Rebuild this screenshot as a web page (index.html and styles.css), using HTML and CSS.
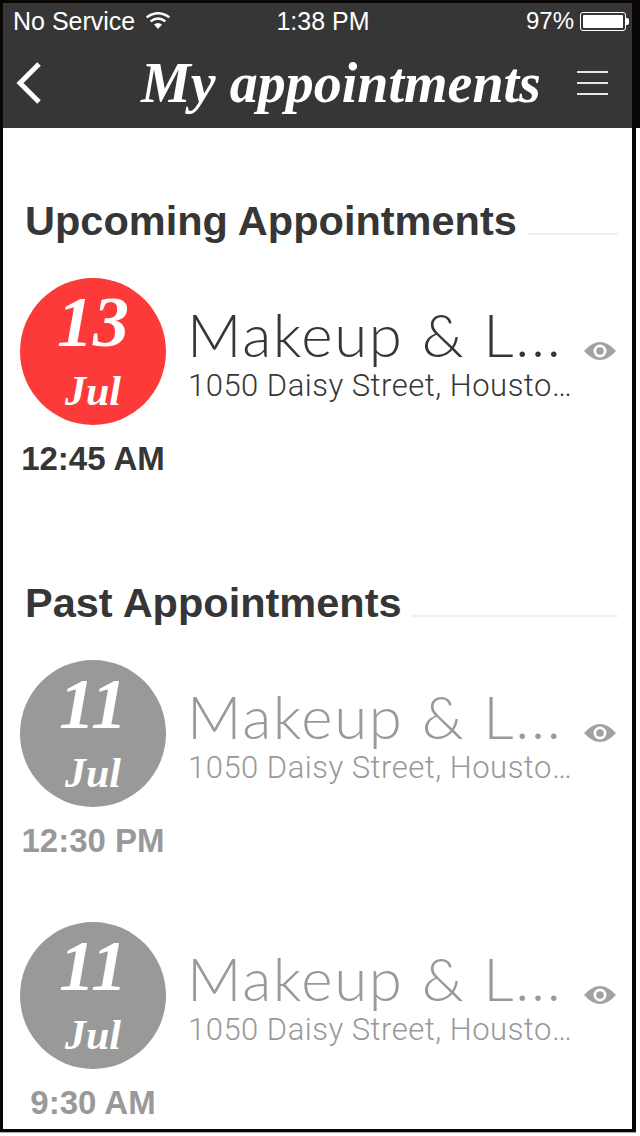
FILE: index.html
```html
<!DOCTYPE html>
<html lang="en">

<head>
    <meta charset="UTF-8">
    <meta name="viewport" content="width=device-width, initial-scale=1.0">
    <title>My appointments</title>
    <link rel="stylesheet" href="styles.css">
</head>

<body>
    <div class="frame">
        <header class="top-bar">
            <div class="status-bar">
                <div class="status-left">
                    <span>No Service</span>
                    <svg class="wifi" width="26" height="18" viewBox="0 0 26 18">
                        <path d="M13 17 L9 12.6 Q13 9.6 17 12.6 Z" fill="#fff" />
                        <path d="M5.6 9.4 Q13 3.6 20.4 9.4" fill="none" stroke="#fff" stroke-width="2.4" />
                        <path d="M1.6 5.4 Q13 -3 24.4 5.4" fill="none" stroke="#fff" stroke-width="2.4" />
                    </svg>
                </div>
                <span class="status-time">1:38 PM</span>
                <div class="status-right">
                    <span>97%</span>
                    <div class="battery">
                        <div class="battery-fill"></div>
                    </div>
                    <div class="battery-tip"></div>
                </div>
            </div>
            <div class="nav-bar">
                <svg class="back" width="30" height="44" viewBox="0 0 30 44">
                    <path d="M25 3 L6 22 L25 41" fill="none" stroke="#fff" stroke-width="5" />
                </svg>
                <h1 class="nav-title">My appointments</h1>
                <div class="menu">
                    <span></span>
                    <span></span>
                    <span></span>
                </div>
            </div>
        </header>

        <main class="content">
            <section class="section upcoming">
                <div class="section-head">
                    <h2>Upcoming Appointments</h2>
                    <div class="rule"></div>
                </div>
                <div class="appt">
                    <div class="when">
                        <div class="date-circle red">
                            <span class="day">13</span>
                            <span class="month">Jul</span>
                        </div>
                        <p class="time">12:45 AM</p>
                    </div>
                    <div class="info">
                        <h3>Makeup &amp; L...</h3>
                        <p>1050 Daisy Street, Housto…</p>
                    </div>
                    <svg class="eye" width="34" height="22" viewBox="0 0 34 22">
                        <path fill-rule="evenodd" d="M1 11 Q17 -7 33 11 Q17 29 1 11 Z M17 4.5 A6.5 6.5 0 1 0 17 17.5 A6.5 6.5 0 1 0 17 4.5 Z" />
                        <circle cx="17" cy="11" r="3.8" />
                    </svg>
                </div>
            </section>

            <section class="section past">
                <div class="section-head">
                    <h2>Past Appointments</h2>
                    <div class="rule"></div>
                </div>
                <div class="appt">
                    <div class="when">
                        <div class="date-circle">
                            <span class="day">11</span>
                            <span class="month">Jul</span>
                        </div>
                        <p class="time">12:30 PM</p>
                    </div>
                    <div class="info">
                        <h3>Makeup &amp; L...</h3>
                        <p>1050 Daisy Street, Housto…</p>
                    </div>
                    <svg class="eye" width="34" height="22" viewBox="0 0 34 22">
                        <path fill-rule="evenodd" d="M1 11 Q17 -7 33 11 Q17 29 1 11 Z M17 4.5 A6.5 6.5 0 1 0 17 17.5 A6.5 6.5 0 1 0 17 4.5 Z" />
                        <circle cx="17" cy="11" r="3.8" />
                    </svg>
                </div>
                <div class="appt">
                    <div class="when">
                        <div class="date-circle">
                            <span class="day">11</span>
                            <span class="month">Jul</span>
                        </div>
                        <p class="time">9:30 AM</p>
                    </div>
                    <div class="info">
                        <h3>Makeup &amp; L...</h3>
                        <p>1050 Daisy Street, Housto…</p>
                    </div>
                    <svg class="eye" width="34" height="22" viewBox="0 0 34 22">
                        <path fill-rule="evenodd" d="M1 11 Q17 -7 33 11 Q17 29 1 11 Z M17 4.5 A6.5 6.5 0 1 0 17 17.5 A6.5 6.5 0 1 0 17 4.5 Z" />
                        <circle cx="17" cy="11" r="3.8" />
                    </svg>
                </div>
            </section>
        </main>
    </div>
    <div class="corner-strip"></div>
</body>

</html>
```

FILE: styles.css
```css
html,
body {
    margin: 0;
    padding: 0;
    background-color: #fff;
}

body {
    font-family: "Liberation Sans", Arial, sans-serif;
    color: #363636;
    width: 640px;
    height: 1136px;
    overflow: hidden;
    position: relative;
}

.frame {
    box-sizing: border-box;
    width: 636px;
    height: 1132px;
    border: 3px solid #0a0505;
    border-right-width: 4px;
    box-shadow: 0 1px 0 #aaa;
    overflow: hidden;
}

.corner-strip {
    position: absolute;
    top: 0;
    right: 0;
    width: 4px;
    height: 128px;
    background-color: #0a0505;
}

.top-bar {
    height: 125px;
    background-color: #363636;
    color: #fff;
}

.status-bar {
    display: grid;
    grid-template-columns: 1fr auto 1fr;
    align-items: center;
    height: 36px;
    padding: 0 3px 0 10px;
    font-size: 25px;
}

.status-left {
    display: flex;
    align-items: center;
    gap: 10px;
}

.status-time {
    margin-left: 4px;
}

.status-right {
    display: flex;
    align-items: center;
    justify-content: flex-end;
    font-size: 24px;
}

.battery {
    box-sizing: border-box;
    width: 46px;
    height: 19px;
    margin-left: 6px;
    padding: 2px;
    border: 1px solid #fff;
    border-radius: 3px;
}

.battery-fill {
    height: 100%;
    background-color: #fff;
    border-radius: 1px;
}

.battery-tip {
    width: 3px;
    height: 7px;
    background-color: #fff;
    border-radius: 0 2px 2px 0;
}

.nav-bar {
    display: flex;
    align-items: center;
    height: 88px;
    padding: 0 24px 0 11px;
}

.back {
    flex: none;
}

.nav-title {
    flex: 1;
    margin: 0;
    padding-left: 61px;
    text-align: center;
    font-family: "Liberation Serif", serif;
    font-style: italic;
    font-weight: bold;
    font-size: 56px;
    line-height: 60px;
    white-space: nowrap;
}

.menu {
    display: flex;
    flex-direction: column;
    gap: 9px;
    width: 31px;
    flex: none;
}

.menu span {
    height: 2px;
    background-color: #e6e6e6;
}

.content {
    padding: 0 14px 0 17px;
}

.section-head {
    display: flex;
    align-items: flex-end;
    gap: 10px;
    padding-left: 5px;
}

.section-head h2 {
    margin: 0;
    font-size: 41.5px;
    line-height: 44px;
    font-weight: bold;
    color: #363636;
    white-space: nowrap;
}

.rule {
    flex: 1;
    height: 2px;
    margin-bottom: 8px;
    background-color: #f0f0f0;
}

.upcoming {
    padding-top: 71px;
}

.past {
    padding-top: 103px;
}

.appt {
    display: flex;
    align-items: flex-start;
    margin-top: 35px;
}

.past .appt + .appt {
    margin-top: 62px;
}

.when {
    width: 146px;
    flex: none;
    text-align: center;
}

.date-circle {
    display: flex;
    flex-direction: column;
    align-items: center;
    width: 146px;
    height: 147px;
    border-radius: 50%;
    background-color: #999;
    color: #fff;
    font-family: "Liberation Serif", serif;
    font-style: italic;
    font-weight: bold;
}

.date-circle.red {
    background-color: #fc3a3a;
}

.day {
    font-size: 72px;
    line-height: 72px;
    margin-top: 8px;
}

.month {
    font-size: 42px;
    line-height: 44px;
    margin-top: 11px;
}

.time {
    margin: 15px 0 0;
    font-size: 33px;
    line-height: 38px;
    font-weight: bold;
    white-space: nowrap;
}

.past .time {
    color: #999;
}

.info {
    flex: 1;
    min-width: 0;
    margin-left: 22px;
    margin-top: 24px;
    color: #363636;
}

.past .info {
    color: #999;
}

.info h3 {
    margin: 0 0 0 -1px;
    font-family: "Lato", "Liberation Sans", sans-serif;
    font-weight: 300;
    font-size: 60px;
    line-height: 64px;
    letter-spacing: 1.7px;
    white-space: nowrap;
}

.info p {
    margin: 2px 0 0;
    font-family: Roboto, "Liberation Sans", sans-serif;
    font-weight: 300;
    font-size: 31px;
    line-height: 36px;
    letter-spacing: 0.5px;
    white-space: nowrap;
}

.eye {
    flex: none;
    margin: 62px 1px 0 0;
    fill: #a3a3a3;
}
```
